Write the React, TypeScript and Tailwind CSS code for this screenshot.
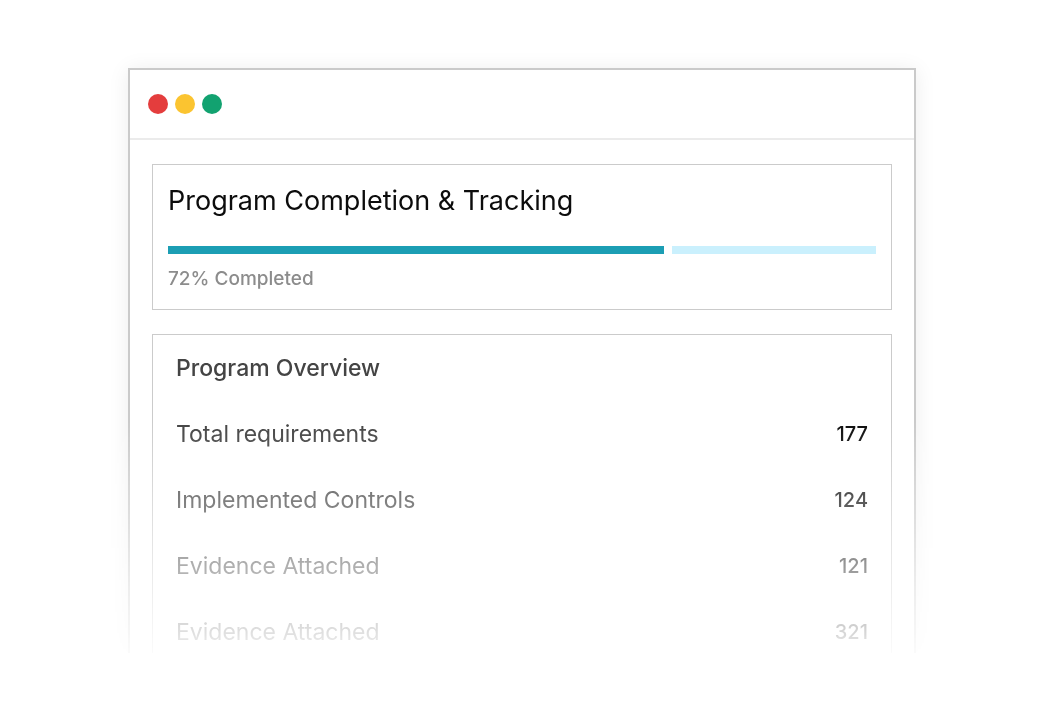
interface OverviewItem {
  label: string;
  value: number;
}

const items: OverviewItem[] = [
  { label: 'Total requirements', value: 177 },
  { label: 'Implemented Controls', value: 124 },
  { label: 'Evidence Attached', value: 121 },
  { label: 'Evidence Attached', value: 321 },
];

function WindowHeader() {
  return (
    <header className="flex h-[70px] items-center gap-[7px] border-b-2 border-[#ebebeb] px-[18px]">
      <span className="h-5 w-5 rounded-full bg-[#e43d3d]" />
      <span className="h-5 w-5 rounded-full bg-[#fbc430]" />
      <span className="h-5 w-5 rounded-full bg-[#12a270]" />
    </header>
  );
}

function CompletionCard() {
  return (
    <section className="border border-[#cbcbcb] px-[15px] pt-4 pb-[14px]">
      <h1 className="text-[27px] leading-10 text-[#0c0c0c]">Program Completion &amp; Tracking</h1>
      <div
        role="progressbar"
        aria-label="Program completion"
        aria-valuenow={72}
        aria-valuemin={0}
        aria-valuemax={100}
        className="mt-[25px] flex h-2 gap-2"
      >
        <div className="w-[70%] bg-[#1c9eb4]" />
        <div className="flex-1 bg-[#caf0fd]" />
      </div>
      <p className="mt-[9px] text-[19px] leading-8 font-medium text-[#8c8c8c]">72% Completed</p>
    </section>
  );
}

function OverviewCard() {
  return (
    <section className="border border-b-0 border-[#cbcbcb] px-[23px] pt-4 pb-1">
      <h2 className="text-[23px] leading-[34px] font-medium text-[#444444]">Program Overview</h2>
      <table className="w-full">
        <tbody>
          {items.map((item, index) => (
            <tr key={index}>
              <th scope="row" className="pt-8 text-left text-[23px] leading-[34px] font-normal text-[#444444]">
                {item.label}
              </th>
              <td className="pt-8 text-right text-xl leading-[34px] font-medium text-[#0c0c0c]">{item.value}</td>
            </tr>
          ))}
        </tbody>
      </table>
    </section>
  );
}

export default function App() {
  return (
    <div className="min-h-screen bg-white">
      {/* The window fades out towards the bottom */}
      <main className="overflow-hidden pt-[68px] pr-[126px] pl-32 font-['Inter',sans-serif] [mask-image:linear-gradient(to_bottom,black_420px,transparent_675px)]">
        <div className="border-2 border-b-0 border-[#cacaca] bg-white shadow-[0_2px_20px_rgba(0,0,0,0.08)]">
          <WindowHeader />
          <div className="flex flex-col gap-6 px-[22px] pt-6">
            <CompletionCard />
            <OverviewCard />
          </div>
        </div>
      </main>
    </div>
  );
}
